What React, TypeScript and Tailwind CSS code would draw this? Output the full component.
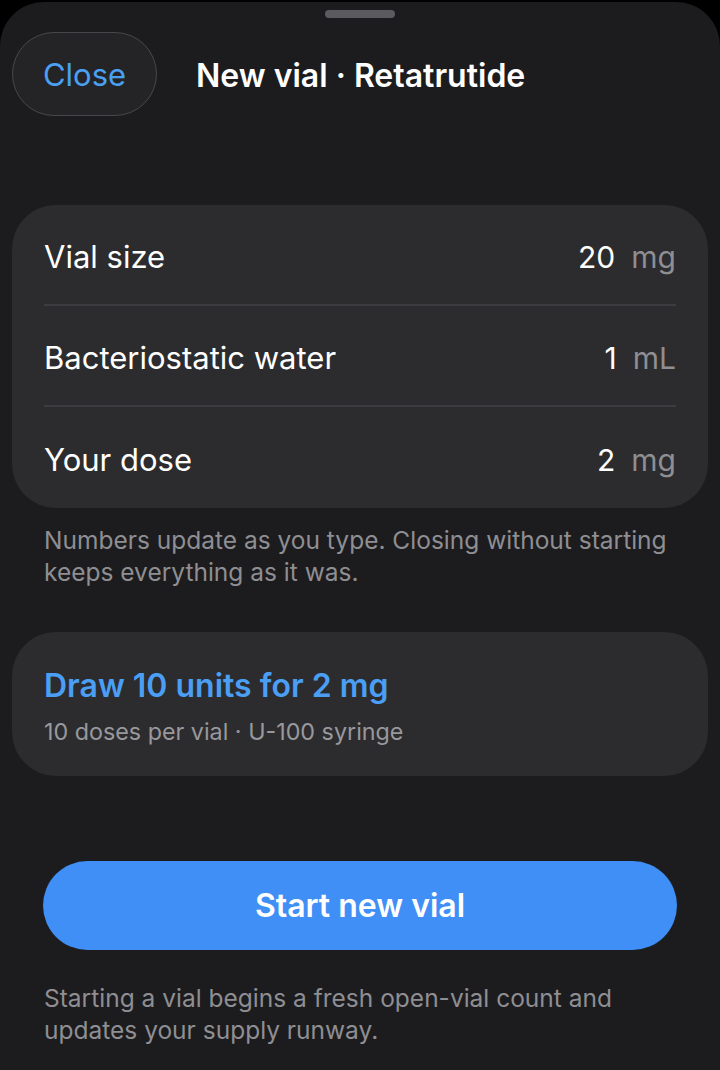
import React from 'react';

const rows = [
  { label: 'Vial size', value: '20', unit: 'mg' },
  { label: 'Bacteriostatic water', value: '1', unit: 'mL' },
  { label: 'Your dose', value: '2', unit: 'mg' },
];

export default function App() {
  return (
    <div className="min-h-[1070px] w-[720px] bg-black pt-[2px] font-['Inter',sans-serif]">
      <div className="min-h-[1068px] rounded-t-[44px] bg-[#1c1c1e] px-3 pt-[8px] pb-8">
        {/* grabber */}
        <div className="flex justify-center">
          <div className="h-2 w-[70px] rounded-full bg-[#5b5b5f]" />
        </div>

        {/* header */}
        <div className="mt-[14px] flex items-center">
          <button className="flex h-[84px] w-[145px] items-center justify-center rounded-[42px] border border-[#48484c] bg-[#242426] pt-[2px] text-[31px] text-[#4aa0f2]">
            Close
          </button>
          <h1 className="ml-[39px] pt-[3px] text-[32px] font-semibold text-white">New vial · Retatrutide</h1>
        </div>

        {/* inputs card */}
        <div className="mt-[89px] rounded-[44px] bg-[#2c2c2e] px-8">
          {rows.map((r, i) => (
            <div
              key={r.label}
              className={`flex h-[101px] items-center justify-between pt-[5px] ${i < rows.length - 1 ? 'border-b-2 border-[#3c3c40]' : ''}`}
            >
              <span className="text-[31px] text-white">{r.label}</span>
              <span className="flex items-baseline gap-4 text-[30px]">
                <span className="text-white">{r.value}</span>
                <span className="text-[#8e8e93]">{r.unit}</span>
              </span>
            </div>
          ))}
        </div>

        <p className="mt-[16px] pl-8 pr-4 text-[24.5px] leading-[32px] text-[#8e8e93]">
          Numbers update as you type. Closing without starting keeps everything as it was.
        </p>

        {/* result card */}
        <div className="mt-[44px] flex h-[144px] flex-col justify-center rounded-[44px] bg-[#2c2c2e] px-8 pt-[3px]">
          <div className="text-[32px] font-semibold text-[#4a9ff5]">Draw 10 units for 2 mg</div>
          <div className="mt-[5px] text-[23.3px] text-[#98989d]">10 doses per vial · U-100 syringe</div>
        </div>

        {/* start button */}
        <div className="mt-[85px] px-[31px]">
          <button className="flex h-[89px] w-full items-center justify-center rounded-full bg-[#3f8ff7] text-[32px] font-semibold text-white">
            Start new vial
          </button>
        </div>

        <p className="mt-[32px] pl-8 pr-4 text-[24.5px] leading-[32px] text-[#8e8e93]">
          Starting a vial begins a fresh open-vial count and updates your supply runway.
        </p>
      </div>
    </div>
  );
}
